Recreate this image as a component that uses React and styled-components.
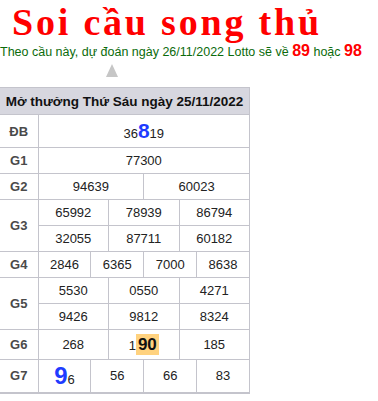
import styled, { createGlobalStyle } from "styled-components";

const GlobalStyle = createGlobalStyle`
  body {
    margin: 0;
    background: #fff;
    font-family: "Liberation Sans", Arial, sans-serif;
  }
`;

const results = [
  { label: "G2", rows: [["94639", "60023"]] },
  {
    label: "G3",
    rows: [
      ["65992", "78939", "86794"],
      ["32055", "87711", "60182"],
    ],
  },
  { label: "G4", rows: [["2846", "6365", "7000", "8638"]] },
  {
    label: "G5",
    rows: [
      ["5530", "0550", "4271"],
      ["9426", "9812", "8324"],
    ],
  },
];

export default function App() {
  return (
    <Page>
      <GlobalStyle />
      <Title>Soi cầu song thủ</Title>
      <Subtitle>
        Theo cầu này, dự đoán ngày 26/11/2022 Lotto sẽ về <Hot>89</Hot> hoặc{" "}
        <Hot>98</Hot>
      </Subtitle>
      <Arrow />
      <Table>
        <colgroup>
          <col style={{ width: 38 }} />
          {Array.from({ length: 12 }).map((_, i) => (
            <col key={i} />
          ))}
        </colgroup>
        <thead>
          <tr>
            <Head colSpan={13}>Mở thưởng Thứ Sáu ngày 25/11/2022</Head>
          </tr>
        </thead>
        <tbody>
          <Row $h={33}>
            <Label>ĐB</Label>
            <Cell colSpan={12}>
              36<Big>8</Big>19
            </Cell>
          </Row>
          <Row>
            <Label>G1</Label>
            <Cell colSpan={12}>77300</Cell>
          </Row>
          {results.map((g) =>
            g.rows.map((r, ri) => (
              <Row key={g.label + ri}>
                {ri === 0 && <Label rowSpan={g.rows.length}>{g.label}</Label>}
                {r.map((n, i) => (
                  <Cell key={i} colSpan={12 / r.length}>
                    {n}
                  </Cell>
                ))}
              </Row>
            ))
          )}
          <Row $h={30}>
            <Label>G6</Label>
            <Cell colSpan={4}>268</Cell>
            <Cell colSpan={4}>
              1<Mark>90</Mark>
            </Cell>
            <Cell colSpan={4}>185</Cell>
          </Row>
          <Row $h={33}>
            <Label>G7</Label>
            <Cell colSpan={3}>
              <Big $size={24}>9</Big>6
            </Cell>
            <Cell colSpan={3}>56</Cell>
            <Cell colSpan={3}>66</Cell>
            <Cell colSpan={3}>83</Cell>
          </Row>
        </tbody>
      </Table>
    </Page>
  );
}

const Page = styled.div`
  width: 378px;
`;

const Title = styled.h1`
  margin: 0;
  padding: 1px 0 0 12px;
  font-family: "Liberation Serif", "Times New Roman", serif;
  font-size: 38px;
  line-height: 42px;
  letter-spacing: 2.8px;
  font-weight: 700;
  color: #ff0000;
  white-space: nowrap;
`;

const Subtitle = styled.div`
  font-size: 12.5px;
  line-height: 16px;
  color: #0b6b0b;
  white-space: nowrap;
`;

const Hot = styled.b`
  font-size: 16px;
  color: #ff0000;
`;

const Arrow = styled.div`
  width: 0;
  height: 0;
  margin: 4px 0 10px 106px;
  border-left: 6px solid transparent;
  border-right: 6px solid transparent;
  border-bottom: 13px solid #c6c6c6;
`;

const Table = styled.table`
  width: 250px;
  table-layout: fixed;
  border-collapse: collapse;
  border-bottom: 2px solid #c4c4cc;
  font-size: 13px;
  color: #222;
`;

const Head = styled.th`
  height: 26px;
  padding: 0;
  background: #d7d7df;
  border: 1px solid #c4c4cc;
  border-left: none;
  font-size: 13.5px;
  font-weight: 700;
  color: #111;
  text-align: center;
  white-space: nowrap;
`;

const Row = styled.tr`
  height: ${({ $h }) => $h || 26}px;
`;

const Label = styled.td`
  padding: 0;
  border: 1px solid #c4c4cc;
  border-left: none;
  text-align: center;
  font-weight: 700;
  color: #4a4a4a;
`;

const Cell = styled.td`
  padding: 0;
  border: 1px solid #c4c4cc;
  text-align: center;
  white-space: nowrap;
`;

const Big = styled.b`
  font-size: ${({ $size }) => $size || 21}px;
  color: #1f3cff;
`;

const Mark = styled.b`
  display: inline-block;
  padding: 1px 2px 0;
  background: #ffd27f;
  font-size: 17px;
  line-height: 20px;
  color: #111;
`;
